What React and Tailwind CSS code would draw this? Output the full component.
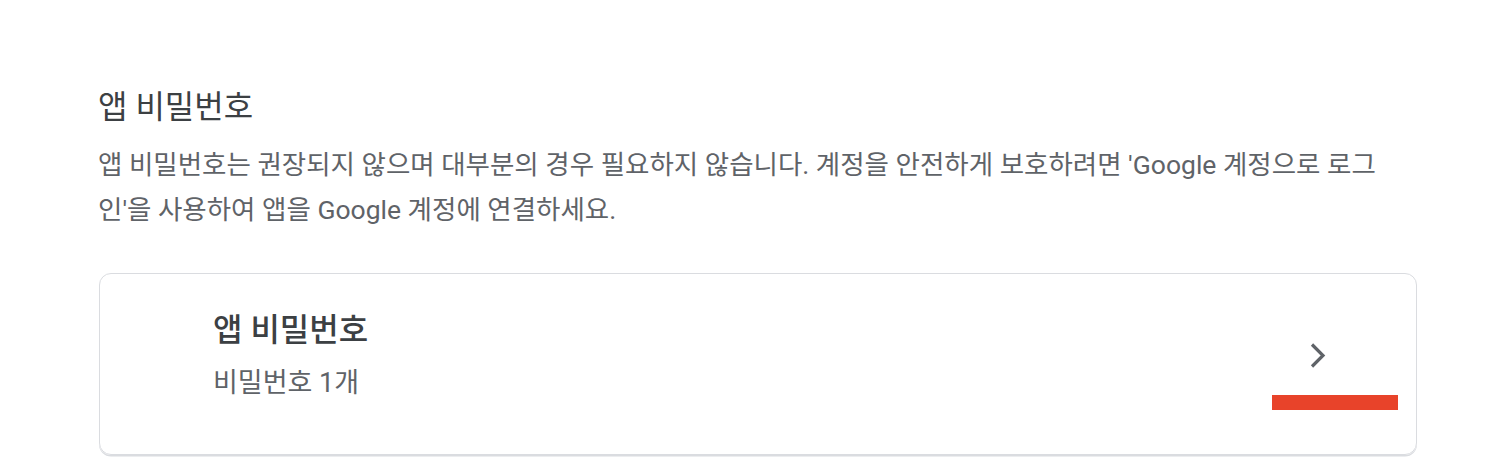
export default function App() {
  return (
    <div className="w-[1498px] h-[476px] overflow-hidden bg-white font-['Roboto','Noto_Sans_CJK_KR',sans-serif]">
      <div className="w-[1320px] ml-[98px] pt-[87px]">
        <h1 className="text-[32px] leading-[40px] text-[#3c4043] font-normal">앱 비밀번호</h1>
        <p className="mt-[15px] w-[1300px] text-[26.5px] leading-[45px] text-[#5f6368]">
          앱 비밀번호는 권장되지 않으며 대부분의 경우 필요하지 않습니다. 계정을 안전하게 보호하려면 'Google 계정으로 로그인'을 사용하여 앱을 Google 계정에 연결하세요.
        </p>
        <div className="relative mt-[41px] ml-[1px] w-[1318px] h-[182px] rounded-[12px] border-[1.5px] border-[#dadce0] shadow-[0_1.5px_0.5px_#dadce0] flex">
          <div className="pl-[113px] pt-[36px] flex flex-col">
            <div className="text-[32px] leading-[40px] font-medium text-[#3c4043]">앱 비밀번호</div>
            <div className="mt-[18px] text-[27px] leading-[30px] text-[#5f6368]">비밀번호 1개</div>
          </div>
          <div className="ml-auto mr-[86px] self-center mb-[16px]">
            <svg width="24" height="28" viewBox="0 0 24 28">
              <path d="M6 2.5 L17 13.5 L6 24.5" fill="none" stroke="#5f6368" strokeWidth="3.2" />
            </svg>
          </div>
          <div className="absolute left-[1171.5px] top-[120.5px] w-[126px] h-[15px] bg-[#e8432a]" />
        </div>
      </div>
    </div>
  );
}
